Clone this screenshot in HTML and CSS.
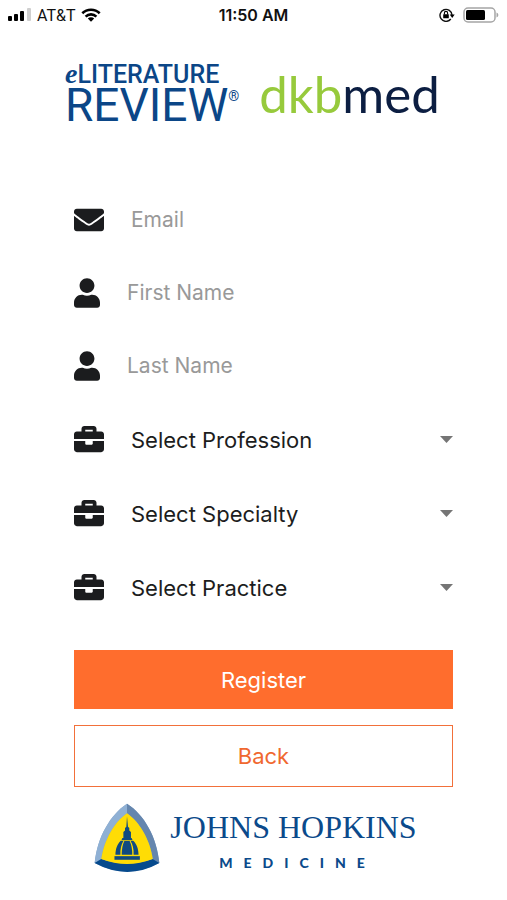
FILE: index.html
```html
<!DOCTYPE html>
<html lang="en">
<head>
<meta charset="utf-8">
<meta name="viewport" content="width=device-width, initial-scale=1">
<title>Register</title>
<link rel="stylesheet" href="styles.css">
</head>
<body>
<svg class="sprite" aria-hidden="true">
  <symbol id="user" viewBox="0 0 448 512"><path d="M224 256c70.7 0 128-57.3 128-128S294.7 0 224 0 96 57.3 96 128s57.3 128 128 128zm89.6 32h-16.7c-22.2 10.2-46.9 16-72.9 16s-50.6-5.8-72.9-16h-16.7C60.2 288 0 348.2 0 422.4V464c0 26.5 21.5 48 48 48h352c26.5 0 48-21.5 48-48v-41.6c0-74.2-60.2-134.4-134.4-134.4z"/></symbol>
  <symbol id="briefcase" viewBox="0 0 512 512"><path d="M320 336c0 8.84-7.16 16-16 16h-96c-8.84 0-16-7.16-16-16v-48H0v144c0 25.6 22.4 48 48 48h416c25.6 0 48-22.4 48-48V288H320v48zm144-208h-80V80c0-25.6-22.4-48-48-48H176c-25.6 0-48 22.4-48 48v48H48c-25.6 0-48 22.4-48 48v80h512v-80c0-25.6-22.4-48-48-48zm-144 0H192V96h128v32z"/></symbol>
  <symbol id="caret" viewBox="0 0 13 7"><path d="M0 0h13L6.500 7z"/></symbol>
</svg>

<header class="status">
  <div class="status-side">
    <svg class="signal" viewBox="0 0 23 14" aria-hidden="true">
      <rect x="0" y="8" width="4" height="5" rx="1"/><rect x="6" y="6" width="4" height="7" rx="1"/><rect x="12" y="3" width="4" height="10" rx="1"/><rect x="19" y="0" width="4" height="13" rx="1" fill="#cfcfcf"/>
    </svg>
    <span class="carrier">AT&amp;T</span>
    <svg class="wifi" viewBox="0 0 20 14" aria-hidden="true">
      <g fill="none" stroke="#000" stroke-width="2.600"><path d="M1.300 5.200a12.500 12.500 0 0 1 17.400 0"/><path d="M4.600 8.600a7.700 7.700 0 0 1 10.800 0"/></g>
      <path d="M6.800 10.500a4.600 4.600 0 0 1 6.400 0L10 13.800z"/>
    </svg>
  </div>
  <time class="clock">11:50 AM</time>
  <div class="status-side status-end">
    <svg class="lock" viewBox="0 0 16 14" aria-hidden="true">
      <path d="M11.800 11a6 6 0 1 1 1.200-4" fill="none" stroke="#111" stroke-width="1.400"/>
      <path d="M10.700 6.500h5L13.200 10z"/><rect x="4.200" y="6.200" width="5.600" height="4" rx=".5"/>
      <path d="M5.400 6.500V5a1.600 1.600 0 0 1 3.200 0v1.500" fill="none" stroke="#000" stroke-width="1.100"/>
    </svg>
    <svg class="battery" viewBox="0 0 36 16" aria-hidden="true">
      <rect x="1" y="1" width="31" height="14" rx="4" fill="#fff" stroke="#a5a5a5" stroke-width="1.500"/>
      <rect x="3" y="3" width="19" height="10" rx="1.500"/><path d="M33.500 5.500a2.600 2.600 0 0 1 0 5z" fill="#a5a5a5"/>
    </svg>
  </div>
</header>

<main class="page">
  <div class="brands">
    <div class="review">
      <div class="review-top"><i>e</i>LITERATURE</div>
      <div class="review-main">REVIEW<sup>®</sup></div>
    </div>
    <div class="dkb"><span>dkb</span>med</div>
  </div>

  <form class="form">
    <div class="field">
      <svg class="icon" viewBox="0 0 512 512" aria-hidden="true"><path d="M502.300 190.800c3.900-3.100 9.700-.2 9.700 4.700V400c0 26.500-21.500 48-48 48H48c-26.500 0-48-21.500-48-48V195.600c0-5 5.700-7.800 9.700-4.700 22.400 17.400 52.100 39.500 154.100 113.600 21.100 15.400 56.700 47.800 92.200 47.600 35.700.3 72-32.800 92.300-47.600 102-74.100 131.600-96.300 154-113.700zM256 320c23.200.4 56.600-29.200 73.400-41.400 132.700-96.300 142.800-104.700 173.400-128.700 5.800-4.500 9.200-11.500 9.200-18.900v-19c0-26.500-21.500-48-48-48H48c-26.500 0-48 21.500-48 48v19c0 7.400 3.400 14.300 9.200 18.900 30.600 23.900 40.700 32.400 173.400 128.700 16.800 12.200 50.200 41.800 73.400 41.400z"/></svg>
      <input class="control" type="email" placeholder="Email" aria-label="Email">
    </div>
    <div class="field">
      <svg class="icon icon-user" aria-hidden="true"><use href="#user"/></svg>
      <input class="control" type="text" placeholder="First Name" aria-label="First Name">
    </div>
    <div class="field">
      <svg class="icon icon-user" aria-hidden="true"><use href="#user"/></svg>
      <input class="control" type="text" placeholder="Last Name" aria-label="Last Name">
    </div>
    <div class="field field-select">
      <svg class="icon" aria-hidden="true"><use href="#briefcase"/></svg>
      <select class="control" aria-label="Profession"><option>Select Profession</option></select>
      <svg class="caret" aria-hidden="true"><use href="#caret"/></svg>
    </div>
    <div class="field field-select">
      <svg class="icon" aria-hidden="true"><use href="#briefcase"/></svg>
      <select class="control" aria-label="Specialty"><option>Select Specialty</option></select>
      <svg class="caret" aria-hidden="true"><use href="#caret"/></svg>
    </div>
    <div class="field field-select">
      <svg class="icon" aria-hidden="true"><use href="#briefcase"/></svg>
      <select class="control" aria-label="Practice"><option>Select Practice</option></select>
      <svg class="caret" aria-hidden="true"><use href="#caret"/></svg>
    </div>
    <div class="actions">
      <button class="button button-primary" type="submit">Register</button>
      <button class="button" type="button">Back</button>
    </div>
  </form>

  <footer class="hopkins">
    <svg class="crest" viewBox="28 24 200 210" aria-hidden="true">
      <path d="M128 25C78 58 38 125 30 205q96 52 196 0C218 125 180 58 128 25z" fill="#7f9fc4"/>
      <path d="M128 25C78 58 38 125 30 205l20-12C58 135 90 80 128 54z" fill="#8fb0d4"/>
      <path d="M128 25c52 33 90 100 98 180l-20-12C198 135 166 80 128 54z" fill="#6586ae"/>
      <path d="M30 205l20-12q78 26 156 0l20 12q-96 54-196 0z" fill="#064a8d"/>
      <path d="M128 54C90 80 58 135 50 193q78 30 156 0C198 135 166 80 128 54z" fill="#ffdc05"/>
      <g fill="#104a80">
        <path d="M128 64l3 31 4 4v7l5 5v20h-23v-20l5-5v-7l4-4z"/>
        <path d="M114 129h28l3 7h-34z"/>
        <path d="M109 137c-10 9-16 25-16 43h15c-1-18 3-32 9-42zM147 137c10 9 16 25 16 43h-15c1-18-3-32-9-42z"/>
        <path d="M120 138c-6 12-8 26-8 42h32c0-16-2-30-8-42z"/>
        <path d="M90 184h77v11H90z"/>
      </g>
    </svg>
    <div class="hopkins-text">
      <div class="hopkins-name">JOHNS HOPKINS</div>
      <div class="hopkins-unit">MEDICINE</div>
    </div>
  </footer>
</main>
</body>
</html>
```
FILE: styles.css
```css
* { box-sizing: border-box; }

body {
  margin: 0;
  background: #fff;
  color: #1c1d20;
  font-family: Inter, "Liberation Sans", sans-serif;
}

.sprite { position: absolute; width: 0; height: 0; }

.status {
  display: flex;
  align-items: center;
  height: 30px;
  padding: 0 8px;
  color: #111;
  font-size: 16px;
}
.status-side { display: flex; flex: 1; align-items: center; gap: 6px; }
.status-end { justify-content: flex-end; gap: 8px; }
.signal { width: 23px; height: 14px; }
.carrier { font-family: Roboto, sans-serif; }
.wifi { width: 20px; height: 14px; }
.clock { font-size: 16px; font-weight: 600; }
.lock { width: 16px; height: 14px; }
.battery { width: 36px; height: 16px; }

.page { padding: 32px 54px 24px 74px; }

.brands {
  display: flex;
  gap: 20px;
  height: 64px;
  margin: 0 -16px 0 -9px;
  white-space: nowrap;
}
.review { color: #0b4687; font-family: Roboto, sans-serif; }
.review-top { font-size: 25px; font-weight: 500; line-height: 24px; }
.review-top i { font-family: "Liberation Serif", serif; font-size: 28px; font-weight: 700; line-height: 24px; }
.review-main { font-size: 46px; font-weight: 400; line-height: 36px; }
.review-main sup { font-size: 14px; font-weight: 400; line-height: 16px; vertical-align: 20px; }
.dkb {
  color: #0c1e42;
  font-family: Lato, sans-serif;
  font-size: 51px;
  font-weight: 400;
  line-height: 64px;
}
.dkb span { color: #97ca3c; }

.form { padding-top: 57px; }
.field { display: flex; align-items: center; gap: 27px; height: 73px; }
.field-select { height: 74px; }
.icon { flex: none; width: 30px; height: 30px; fill: #1b1c1e; }
.icon-user { width: 26px; }
.control {
  flex: 1;
  min-width: 0;
  height: 44px;
  margin: 0;
  padding: 0;
  border: 0;
  outline: 0;
  background: none;
  color: #1c1d20;
  font: 400 21px/28px Inter, "Liberation Sans", sans-serif;
  appearance: none;
}
select.control { padding: 2px 0 0; font-size: 22px; }
.control::placeholder { color: #999; opacity: 1; }
.caret { flex: none; width: 13px; height: 7px; fill: #757575; }

.actions { display: grid; gap: 16px; padding-top: 26px; }
.button {
  height: 62px;
  padding: 0;
  border: 1px solid #f2703a;
  background: #fff;
  color: #f0682f;
  font: 400 22px/28px Inter, "Liberation Sans", sans-serif;
}
.button-primary { height: 59px; border-color: #ff6d2d; background: #ff6d2d; color: #fff; }

.hopkins {
  display: flex;
  justify-content: center;
  gap: 10px;
  padding: 16px 16px 0 0;
  color: #0b4a8b;
  white-space: nowrap;
}
.crest { flex: none; width: 66px; height: 70px; }
.hopkins-text { text-align: center; }
.hopkins-name { font-family: "Liberation Serif", serif; font-size: 32px; line-height: 48px; }
.hopkins-unit {
  padding-left: 8px;
  font-family: Lato, sans-serif;
  font-size: 14px;
  font-weight: 900;
  line-height: 24px;
  letter-spacing: 11px;
}
```
